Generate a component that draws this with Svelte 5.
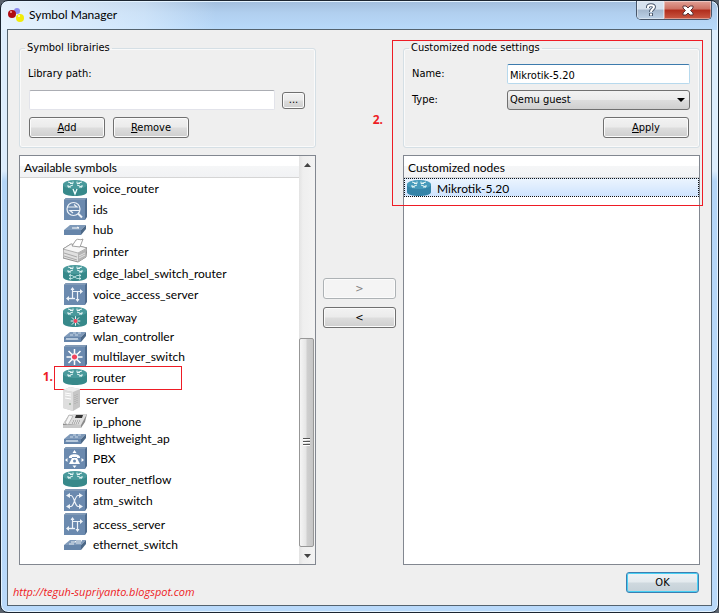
<script>
  const symbols = [
    { name: 'voice_router', icon: 'router', mark: 'voice' },
    { name: 'ids', icon: 'box', mark: 'ids' },
    { name: 'hub', icon: 'flat', mark: 'hub' },
    { name: 'printer', icon: 'printer' },
    { name: 'edge_label_switch_router', icon: 'router', mark: 'edge' },
    { name: 'voice_access_server', icon: 'box', mark: 'access' },
    { name: 'gateway', icon: 'gateway' },
    { name: 'wlan_controller', icon: 'flat', mark: 'wlan' },
    { name: 'multilayer_switch', icon: 'box', mark: 'multilayer' },
    { name: 'router', icon: 'router', step: '1.' },
    { name: 'server', icon: 'server' },
    { name: 'ip_phone', icon: 'phone' },
    { name: 'lightweight_ap', icon: 'flat', mark: 'wlan' },
    { name: 'PBX', icon: 'box', mark: 'pbx' },
    { name: 'router_netflow', icon: 'router' },
    { name: 'atm_switch', icon: 'box', mark: 'atm' },
    { name: 'access_server', icon: 'box', mark: 'access' },
    { name: 'ethernet_switch', icon: 'flat', mark: 'switch' }
  ];

  let libraryPath = $state('');
  let nodeName = $state('Mikrotik-5.20');
  let nodeType = $state('Qemu guest');
  let customNodes = $state(['Mikrotik-5.20']);

  function applySettings() {
    customNodes = [nodeName];
  }
</script>

{#snippet router(mark, body, top)}
  <svg width="24" height="16" viewBox="0 0 24 16" aria-hidden="true">
    <path d="M0 4v8c0 5.300 24 5.300 24 0V4z" fill={body} />
    <ellipse cx="12" cy="4.500" rx="12" ry="4.500" fill={top} />
    <path d="M5 2l5 1.500M10 1.500v2H7M19 2l-5 1.500M14 1.500v2h3M10 5L5 7M5 5v2h3M14 5l5 2M19 5v2h-3" fill="none" stroke="#e4f5f5" stroke-width="1" />
    {#if mark === 'voice'}
      <path d="M10 9l2 5 2-5" fill="none" stroke="#f4ffff" stroke-width="1.300" />
    {:else if mark === 'edge'}
      <path d="M6 10.500h3l5 3h4M6 13.500h3l5-3h4M16 9l2 1.500-2 1M16 12.500l2 1-2 1M8 9l-2 1.500 2 1M8 12.500l-2 1 2 1" fill="none" stroke="#d0eeee" stroke-width=".8" />
    {/if}
  </svg>
{/snippet}

{#snippet burst(x, y, r)}
  <g transform="translate({x} {y}) scale({r})">
    <path d="M0-8V8M-8 0H8M-6-6L6 6M6-6L-6 6" stroke="#fff" stroke-width="1.500" />
    <circle r="3.200" fill="#f2455e" />
  </g>
{/snippet}

{#snippet symbolIcon(icon, mark)}
  {#if icon === 'router'}
    {@render router(mark, '#37898a', '#4a9a9c')}
  {:else if icon === 'box'}
    <svg width="24" height="22" viewBox="0 0 24 22" aria-hidden="true">
      <path d="M1 2l2-2h21v19l-2 3z" fill="#4f6c8e" />
      <path d="M1 2l2-2h21l-2 2z" fill="#8099b6" />
      <rect x="1" y="2" width="21" height="20" fill="#6b8aaf" />
      <g fill="none" stroke="#eef3f8" stroke-width="1.200">
        {#if mark === 'ids'}
          <circle cx="10.500" cy="11" r="6.500" />
          <path d="M15 15.500l4 4" stroke-width="2" />
          <path d="M4 9h10l-3-2.500M17 12.500H7l3 2.500" />
        {:else if mark === 'access'}
          <path d="M4 15.500h8" stroke-width="1.400" />
          <path d="M9.500 5v10M9.500 8.500h9M14.500 8.500V18" />
          <path d="M6 13v5l-3-2.500zM7.500 7l2-3 2 3zM17 6v5l3-2.500zM12.500 16l2 3 2-3z" fill="#eef3f8" stroke="none" />
        {:else if mark === 'multilayer'}
          {@render burst(11.5, 12, 1)}
        {:else if mark === 'pbx'}
          <path d="M6 11c-1-5 12-5 11 0h-3v-1H9v1z" fill="#fff" stroke="none" />
          <path d="M9 11h5l3 6H6z" fill="#fff" stroke="none" />
          <path d="M11.500 3l2 3h-4zM11.500 21l2-2.500h-4zM2 13l2.500-2v4zM21 13l-2.500-2v4z" fill="#fff" stroke="none" />
          <circle cx="11.500" cy="14" r="1.500" fill="#6b8aaf" stroke="none" />
        {:else if mark === 'atm'}
          <path d="M5 6.500h3c3 0 4 11 7 11h3M5 17.500h3c3 0 4-11 7-11h3" />
          <path d="M16 4v5l4-2.500zM16 15v5l4-2.500zM7 4v5L3 6.500zM7 15v5l-4-2.500z" fill="#eef3f8" stroke="none" />
        {/if}
      </g>
    </svg>
  {:else if icon === 'flat'}
    <svg width="24" height="11" viewBox="0 0 24 11" aria-hidden="true">
      <path d="M1 6l6-5h16l-5 5z" fill="#7f9aba" />
      <path d="M1 6h17v5H1z" fill="#6685aa" />
      <path d="M18 6l5-5v4l-5 6z" fill="#4c6887" />
      {#if mark === 'hub'}
        <path d="M9 4h7l-2-1" fill="none" stroke="#fff" />
      {:else if mark === 'wlan'}
        <path d="M3 9l1-2 1 2 1-2 1 2 1-2 1 2 1-2 1 2 1-2 1 2 1-2 1 2M7 4h3M12 4h3M10 2h3M15 2h3" fill="none" stroke="#dce7f2" stroke-width=".8" />
      {:else}
        <path d="M8 3h5l-1-1M13 2h6l-1-1M6 5h5M13 4h5" fill="none" stroke="#fff" stroke-width=".8" />
      {/if}
    </svg>
  {:else if icon === 'gateway'}
    <svg width="24" height="20" viewBox="0 0 24 20" aria-hidden="true">
      <path d="M0 4v12c0 5.300 24 5.300 24 0V4z" fill="#37898a" />
      <ellipse cx="12" cy="4.500" rx="12" ry="4.500" fill="#4a9a9c" />
      <path d="M5 2l5 1.500M10 1.500v2H7M19 2l-5 1.500M14 1.500v2h3M10 5L5 7M5 5v2h3M14 5l5 2M19 5v2h-3" fill="none" stroke="#e4f5f5" />
      {@render burst(12.5, 14, 0.6)}
    </svg>
  {:else if icon === 'printer'}
    <svg width="24" height="25" viewBox="0 0 24 25" aria-hidden="true">
      <path d="M0 11l8-5 16 4-1 9-8 5-15-4z" fill="#e0e0e0" stroke="#777" stroke-width=".8" />
      <path d="M0 11l15 4 9-5-16-4z" fill="#f7f7f7" stroke="#888" stroke-width=".6" />
      <path d="M9 8l4-6c2-2 4 1 7-1l-3 8z" fill="#fff" stroke="#888" stroke-width=".8" />
      <path d="M15 15l8-4v8l-8 5z" fill="#b4b4b4" />
      <path d="M1 15l13 4M1 18l13 4" stroke="#999" stroke-width=".8" />
      <path d="M16 18l6-3M16 20l6-3" stroke="#eee" stroke-width=".8" />
    </svg>
  {:else if icon === 'server'}
    <svg width="17" height="24" viewBox="0 0 17 24" aria-hidden="true">
      <path d="M0 3l7-3 10 2v18l-7 4-10-3z" fill="#c6c6c6" />
      <path d="M0 3l7-3 10 2-7 3z" fill="#eee" />
      <path d="M0 3l10 2v19L0 21z" fill="#dedede" />
      <path d="M2 6l6 1M2 8l6 1M2 11l6 1" stroke="#fff" />
      <path d="M12 8v10M14 7v10" stroke="#aaa" stroke-dasharray="1 1" />
      <circle cx="7" cy="17" r="1" fill="#9a9" />
    </svg>
  {:else}
    <svg width="24" height="16" viewBox="0 0 24 16" aria-hidden="true">
      <path d="M0 11L6 2l18-1-2 8-4 6H0z" fill="#8b8b8b" />
      <path d="M0 11L6 2l18-1-6 11z" fill="#dedede" />
      <path d="M2 10l4-8 4 1-5 9z" fill="#f6f6f6" stroke="#999" stroke-width=".6" />
      <path d="M13 2h7l-1 3h-7z" fill="#333" />
      <path d="M10 8h8M9 10h8" stroke="#888" stroke-dasharray="1 1" />
      <path d="M0 12h18v3H0z" fill="#c9c9c9" />
    </svg>
  {/if}
{/snippet}

<div class="window">
  <header class="title-bar">
    <svg class="app-icon" width="16" height="16" viewBox="0 0 16 16" aria-hidden="true">
      <circle cx="9" cy="4" r="3" fill="#8c8cf0" />
      <circle cx="4" cy="7" r="4" fill="#b00b12" />
      <circle cx="3" cy="5" r="1" fill="#f6a0a0" />
      <circle cx="12" cy="11" r="4" fill="#f1eb08" />
      <circle cx="11" cy="9" r="1" fill="#ffffc0" />
    </svg>
    <h1>Symbol Manager</h1>
    <div class="window-buttons">
      <button class="help" aria-label="Help">
        <svg width="12" height="14" viewBox="0 0 12 14">
          <path d="M3 5V4c0-2.500 6-2.500 6 0 0 2-3 2-3 5M6 10v3" fill="none" stroke="#4c5b70" stroke-width="4" />
          <path d="M3 5V4c0-2.500 6-2.500 6 0 0 2-3 2-3 5M6 10.500v2" fill="none" stroke="#fff" stroke-width="2" />
        </svg>
      </button>
      <button class="close" aria-label="Close">
        <svg width="12" height="11" viewBox="0 0 12 11">
          <path d="M1 1h3l2 2 2-2h3v2L8.500 5.500 11 8v2H8L6 8l-2 2H1V8l2.500-2.500L1 3z" fill="#fff" stroke="#5a3438" />
        </svg>
      </button>
    </div>
  </header>

  <main class="client">
    <div class="columns">
      <section class="column">
        <fieldset>
          <legend>Symbol librairies</legend>
          <label class="caption" for="library-path">Library path:</label>
          <div class="path-row">
            <input id="library-path" type="text" bind:value={libraryPath} />
            <button class="btn browse" aria-label="Browse">...</button>
          </div>
          <div class="button-row">
            <button class="btn"><u>A</u>dd</button>
            <button class="btn"><u>R</u>emove</button>
          </div>
        </fieldset>

        <div class="list">
          <div class="list-main">
            <h2>Available symbols</h2>
            <ul class="symbols">
              {#each symbols as symbol (symbol.name)}
                <li>
                  {@render symbolIcon(symbol.icon, symbol.mark)}
                  <span>{symbol.name}</span>
                  {#if symbol.step}
                    <div class="mark-row"><b>{symbol.step}</b></div>
                  {/if}
                </li>
              {/each}
            </ul>
          </div>
          <div class="scrollbar">
            <button aria-label="Scroll up">
              <svg width="7" height="4" viewBox="0 0 7 4"><path d="M0 4l3.500-4L7 4z" fill="#444" /></svg>
            </button>
            <div class="track">
              <div class="thumb"><i></i><i></i><i></i></div>
            </div>
            <button aria-label="Scroll down">
              <svg width="7" height="4" viewBox="0 0 7 4"><path d="M0 0l3.500 4L7 0z" fill="#444" /></svg>
            </button>
          </div>
        </div>
      </section>

      <div class="transfer">
        <button class="btn" disabled>&gt;</button>
        <button class="btn">&lt;</button>
      </div>

      <section class="column">
        <fieldset>
          <legend>Customized node settings</legend>
          <div class="field">
            <label for="node-name">Name:</label>
            <input id="node-name" class="focused" type="text" bind:value={nodeName} />
          </div>
          <div class="field">
            <label for="node-type">Type:</label>
            <div class="select-wrap">
              <select id="node-type" bind:value={nodeType}>
                <option>Qemu guest</option>
              </select>
              <svg width="8" height="4" viewBox="0 0 8 4" aria-hidden="true"><path d="M0 0h8L4 4z" /></svg>
            </div>
          </div>
          <div class="button-row apply">
            <button class="btn" onclick={applySettings}><u>A</u>pply</button>
          </div>
        </fieldset>

        <div class="list">
          <div class="list-main">
            <h2>Customized nodes</h2>
            <ul class="nodes">
              {#each customNodes as node}
                <li>
                  {@render router('', '#3484a8', '#479abb')}
                  <span>{node}</span>
                </li>
              {/each}
            </ul>
          </div>
        </div>
        <div class="mark-panel"><b>2.</b></div>
      </section>
    </div>

    <footer>
      <a href="http://teguh-supriyanto.blogspot.com">http://teguh-supriyanto.blogspot.com</a>
      <button class="btn ok">OK</button>
    </footer>
  </main>
</div>

<style>
  :global(body) {
    margin: 0;
    background: #59616b;
  }

  .window {
    box-sizing: border-box;
    min-height: 100vh;
    display: flex;
    flex-direction: column;
    padding: 0 6px 6px;
    border: 1px solid #1c2530;
    border-radius: 8px;
    box-shadow: inset 0 0 0 1px #e4f3ff;
    background:
      linear-gradient(90deg, rgba(240, 248, 255, 0.85), rgba(230, 243, 255, 0.5) 20%, transparent 30%) top / 100% 29px no-repeat,
      linear-gradient(#a2bddc, #b1cfef 12px, #b8dafb 29px) top / 100% 29px no-repeat,
      linear-gradient(#dcecfc, #dcecfc 170px, #b4d5f7 180px, #b9d9fa);
    font: 11px/16px 'DejaVu Sans Condensed', 'DejaVu Sans', sans-serif;
    color: #000;
  }

  button,
  input,
  select {
    box-sizing: border-box;
    margin: 0;
    font: inherit;
    color: inherit;
  }

  .title-bar {
    display: flex;
    align-items: center;
    height: 28px;
    padding-left: 1px;
  }

  .title-bar h1 {
    flex: 1;
    margin: 0 0 0 5px;
    font: 12px/18px Lato, 'Open Sans', sans-serif;
  }

  .window-buttons {
    align-self: flex-start;
    display: flex;
    height: 19px;
    border: 1px solid #47566a;
    border-top: 0;
    border-radius: 0 0 5px 5px;
    box-sizing: border-box;
    overflow: hidden;
  }

  .window-buttons button {
    display: flex;
    align-items: center;
    justify-content: center;
    padding: 0;
    border: 0;
    box-shadow: inset 0 0 0 1px rgba(255, 255, 255, 0.4);
  }

  .help {
    width: 27px;
    background: linear-gradient(#d6e2ef 45%, #a4b7cd 50%, #bdd2e8);
  }

  .close {
    width: 47px;
    background: linear-gradient(#e1a297, #cd7163 45%, #b02c1b 50%, #cb5944);
  }

  .client {
    flex: 1;
    display: flex;
    flex-direction: column;
    border: 1px solid #54636f;
    background: #efefef;
  }

  .columns {
    flex: 1;
    display: grid;
    grid-template-columns: 1fr 73px 1fr;
    gap: 7px;
    padding: 11px 11px 0;
  }

  .column {
    position: relative;
    display: flex;
    flex-direction: column;
    gap: 7px;
    min-width: 0;
  }

  fieldset {
    min-width: 0;
    margin: 0;
    padding: 9px 9px 9px 8px;
    border: 1px solid #d5dfe5;
    border-radius: 3px;
    box-shadow: inset 0 0 0 1px #fafafa;
  }

  legend {
    margin-left: -3px;
    padding: 0 2px;
    line-height: 14px;
  }

  .caption {
    display: block;
    margin-bottom: 6px;
    line-height: 20px;
  }

  input {
    flex: 1;
    min-width: 0;
    height: 20px;
    padding: 2px 2px 0;
    border: 1px solid #e2e3ea;
    border-top-color: #abadb3;
    border-radius: 2px;
    background: #fff;
    outline: 0;
  }

  input.focused {
    border-color: #b7d9ed;
    border-top-color: #3d7bad;
  }

  .path-row {
    display: flex;
    align-items: center;
    gap: 7px;
    padding: 0 1px;
  }

  .button-row {
    display: flex;
    gap: 8px;
    margin-top: 7px;
    padding: 0 1px;
  }

  .button-row.apply {
    justify-content: flex-end;
  }

  .btn {
    width: 76px;
    height: 21px;
    padding: 0;
    border: 1px solid #707070;
    border-radius: 3px;
    background: linear-gradient(#f2f2f2, #ebebeb 48%, #dddddd 52%, #cfcfcf);
    box-shadow: inset 0 0 0 1px #fbfbfb;
  }

  .btn:disabled {
    border-color: #adb2b5;
    background: #f4f4f4;
    color: #838383;
  }

  .browse {
    width: 23px;
    height: 17px;
    line-height: 12px;
  }

  .apply .btn {
    width: 86px;
  }

  .field {
    display: flex;
    align-items: center;
  }

  .field + .field {
    margin-top: 6px;
  }

  .field label {
    width: 95px;
  }

  .select-wrap {
    position: relative;
    flex: 1;
    display: flex;
  }

  select {
    flex: 1;
    height: 20px;
    padding: 0 2px;
    border: 1px solid #707070;
    border-radius: 3px;
    background: linear-gradient(#f2f2f2, #ebebeb 48%, #dddddd 52%, #cfcfcf);
    appearance: none;
  }

  .select-wrap svg {
    position: absolute;
    top: 8px;
    right: 5px;
    pointer-events: none;
  }

  .list {
    flex: 1;
    display: flex;
    border: 1px solid #828790;
    background: #fff;
    font: 12px/16px Lato, 'Open Sans', sans-serif;
  }

  .list-main {
    flex: 1;
    min-width: 0;
  }

  .list h2 {
    margin: 0;
    padding: 4px 4px 1px;
    border-bottom: 1px solid #d5d5d5;
    background: linear-gradient(#fff 45%, #f5f6f7 50%, #f1f2f4);
    font: inherit;
  }

  .list ul {
    margin: 0;
    padding: 0;
    list-style: none;
  }

  .list li {
    position: relative;
    display: flex;
    align-items: center;
    gap: 6px;
  }

  .list .symbols {
    padding-top: 1px;
  }

  .symbols li {
    min-height: 14px;
    padding: 1px 0 1px 43px;
  }

  .list li span {
    padding-top: 1px;
    line-height: 13px;
  }

  .list svg {
    flex: none;
  }

  .nodes li {
    height: 17px;
    padding: 0 2px;
    border: 1px dotted #111;
    background: linear-gradient(#ebf4fe, #cfe4fe);
  }

  .scrollbar {
    display: flex;
    flex-direction: column;
    width: 16px;
    background: linear-gradient(90deg, #e3e3e3, #efefef 4px, #f3f3f3);
  }

  .scrollbar button {
    display: flex;
    align-items: center;
    justify-content: center;
    height: 17px;
    padding: 0;
    border: 0;
    background: none;
  }

  .track {
    flex: 1;
    display: flex;
    flex-direction: column;
    justify-content: flex-end;
  }

  .thumb {
    box-sizing: border-box;
    display: flex;
    flex-direction: column;
    align-items: center;
    justify-content: center;
    gap: 1px;
    width: 15px;
    height: 56%;
    border: 1px solid #979797;
    border-radius: 2px;
    background: linear-gradient(90deg, #f5f5f5, #e6e6e6 45%, #cfcfcf 55%, #c6c6c6);
  }

  .thumb i {
    width: 7px;
    height: 1px;
    border-bottom: 1px solid #fff;
    background: #555;
  }

  .transfer {
    display: flex;
    flex-direction: column;
    justify-content: center;
    gap: 8px;
  }

  .transfer .btn {
    width: 100%;
  }

  /* Numbered red callouts drawn over the dialog */
  .mark-row,
  .mark-panel {
    position: absolute;
    border: 1px solid #ee1c25;
    pointer-events: none;
  }

  .mark-row {
    inset: -2px auto -4px 34px;
    width: 126px;
  }

  .mark-panel {
    top: -1px;
    right: -3px;
    left: -11px;
    height: 164px;
  }

  .mark-row b,
  .mark-panel b {
    position: absolute;
    right: 100%;
    color: #ee1c25;
    font: bold 12px/16px 'Open Sans', 'Noto Sans', sans-serif;
  }

  .mark-row b {
    top: 2px;
    margin-right: 2px;
  }

  .mark-panel b {
    top: 71px;
    margin-right: 10px;
  }

  footer {
    display: flex;
    align-items: flex-start;
    justify-content: space-between;
    padding: 7px 12px 5px 5px;
  }

  footer a {
    align-self: flex-end;
    color: #ee1c25;
    font: italic 11px/16px 'Open Sans', 'Noto Sans', sans-serif;
    text-decoration: none;
  }

  .ok {
    width: 73px;
    margin-bottom: 7px;
    border-color: #3c7fb1;
    background: linear-gradient(#eef3f6, #e3eaee 48%, #cfd9df 52%, #c5d1d8);
    box-shadow: inset 0 0 0 1px #48d0f4;
  }
</style>
